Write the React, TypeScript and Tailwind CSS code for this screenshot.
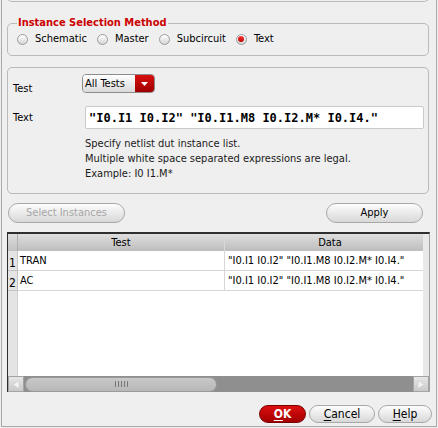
import React from 'react';

const rowsData = [
  { n: 1, test: 'TRAN', data: '"I0.I1 I0.I2" "I0.I1.M8 I0.I2.M* I0.I4."' },
  { n: 2, test: 'AC', data: '"I0.I1 I0.I2" "I0.I1.M8 I0.I2.M* I0.I4."' },
];

function Radio({ label, checked }: { label: string; checked?: boolean }) {
  return (
    <div className="flex items-center gap-[7px]">
      <span className="w-[11px] h-[11px] rounded-full border border-[#9c9c9c] bg-gradient-to-b from-[#ffffff] to-[#d6d6d6] flex items-center justify-center">
        {checked && (
          <span className="w-[6px] h-[6px] rounded-full bg-gradient-to-b from-[#ff3030] to-[#b80000]" />
        )}
      </span>
      <span>{label}</span>
    </div>
  );
}

function PillButton({
  children,
  className = '',
}: {
  children: React.ReactNode;
  className?: string;
}) {
  return (
    <div
      className={`flex items-center justify-center rounded-full border border-[#a8a8a8] bg-gradient-to-b from-[#fdfdfd] to-[#d8d8d8] ${className}`}
    >
      {children}
    </div>
  );
}

export default function App() {
  return (
    <div className="w-[438px] h-[428px] bg-[#efefef] overflow-hidden text-[11px] leading-[14px] text-black font-['DejaVu_Sans_Condensed','DejaVu_Sans',sans-serif]">
      <div className="ml-[1px] w-[436px] h-[427px] border-x border-b border-[#a9a9a9] px-[5px] flex flex-col">
        {/* tail of the group above */}
        <div className="-mt-[4px] h-[6px] w-[422px] border border-t-0 border-[#bababa] rounded-b-[5px]" />

        {/* Instance Selection Method */}
        <fieldset className="mt-[13px] w-[422px] border border-[#bababa] rounded-[5px] px-[9px] pb-[8px]">
          <legend className="px-[1px] text-[11px] leading-[16px] font-bold text-[#cc0000]">
            Instance Selection Method
          </legend>
          <div className="flex items-center h-[16px] gap-[10px]">
            <Radio label="Schematic" />
            <Radio label="Master" />
            <Radio label="Subcircuit" />
            <Radio label="Text" checked />
          </div>
        </fieldset>

        {/* Test / Text panel */}
        <div className="mt-[11px] w-[422px] h-[127px] border border-[#bababa] rounded-[5px] pl-[5px] pt-[6px]">
          <div className="flex">
            <div className="w-[69px] pt-[8px]">Test</div>
            <div className="w-[73px] h-[19px] flex rounded-[4px] border border-[#8c8c8c] overflow-hidden">
              <div className="flex-1 bg-gradient-to-b from-[#ffffff] to-[#dadada] pl-[2px] flex items-center">
                All Tests
              </div>
              <div className="w-[19px] bg-gradient-to-b from-[#d81010] to-[#a00000] flex items-center justify-center">
                <svg width="7" height="4" viewBox="0 0 7 4">
                  <path d="M0 0H7L3.5 4Z" fill="#ffffff" />
                </svg>
              </div>
            </div>
          </div>

          <div className="flex items-center mt-[10px]">
            <div className="w-[72px]">Text</div>
            <div className="w-[339px] h-[23px] bg-white border border-[#cacaca] rounded-[2px] px-[3px] flex items-center text-[12px] font-bold whitespace-pre font-['DejaVu_Sans_Mono',monospace]">
              "I0.I1 I0.I2" "I0.I1.M8 I0.I2.M* I0.I4."
            </div>
          </div>

          <div className="ml-[72px] mt-[7px] leading-[15px] text-[#1a1a1a]">
            <div>Specify netlist dut instance list.</div>
            <div>Multiple white space separated expressions are legal.</div>
            <div>Example: I0 I1.M*</div>
          </div>
        </div>

        {/* action buttons */}
        <div className="mt-[9px] flex items-center">
          <PillButton className="ml-[1px] w-[117px] h-[20px] text-[#a6a6a6]">
            Select Instances
          </PillButton>
          <PillButton className="ml-auto mr-[8px] w-[97px] h-[20px]">Apply</PillButton>
        </div>

        {/* table */}
        <div className="mt-[9px] w-[423px] h-[160px] border-t-2 border-l border-r border-t-[#2e2e2e] border-l-[#2e2e2e] border-r-[#a0a0a0] bg-[#e9e9e9] flex flex-col">
          <div className="flex h-[17px] shrink-0">
            <div className="w-[10px] bg-gradient-to-b from-[#dedede] to-[#c2c2c2] border-r border-[#b0b0b0]" />
            <div className="w-[207px] bg-gradient-to-b from-[#dedede] to-[#bdbdbd] border-r border-[#d8d8d8] flex items-center justify-center">
              Test
            </div>
            <div className="w-[198px] bg-gradient-to-b from-[#dedede] to-[#bdbdbd] flex items-center justify-center pl-[12px]">
              Data
            </div>
          </div>

          {rowsData.map((r) => (
            <div key={r.n} className="flex h-[20px] shrink-0">
              <div className="w-[10px] bg-[#e4e4e4] border-r border-b border-[#c4c4c4] flex items-end justify-center pb-[1px] text-[12px] leading-[12px]">
                {r.n}
              </div>
              <div className="w-[207px] bg-white border-b border-r border-[#d6d6d6] pl-[2px] flex items-center">
                {r.test}
              </div>
              <div className="w-[198px] bg-white border-b border-[#d6d6d6] pl-[3px] flex items-center whitespace-pre">
                {r.data}
              </div>
            </div>
          ))}

          <div className="flex flex-1">
            <div className="w-[10px] bg-[#e4e4e4] border-r border-[#d0d0d0]" />
            <div className="w-[405px] bg-white" />
          </div>

          {/* horizontal scrollbar */}
          <div className="h-[16px] shrink-0 bg-[#8f8f8f] flex items-center">
            <div className="w-[16px] h-[16px] bg-gradient-to-b from-[#e6e6e6] to-[#c9c9c9] border border-[#a4a4a4] flex items-center justify-center">
              <svg width="8" height="9" viewBox="0 0 8 9">
                <path d="M7 0.5V8.5L0.8 4.5Z" fill="#f4f4f4" stroke="#d0d0d0" strokeWidth="0.8" />
              </svg>
            </div>
            <div className="ml-[1px] w-[192px] h-[15px] rounded-full bg-gradient-to-b from-[#c8c8c8] to-[#b8b8b8] border border-[#9a9a9a] flex items-center justify-center gap-[2px]">
              <span className="w-px h-[6px] bg-[#777777]" />
              <span className="w-px h-[6px] bg-[#777777]" />
              <span className="w-px h-[6px] bg-[#777777]" />
              <span className="w-px h-[6px] bg-[#777777]" />
              <span className="w-px h-[6px] bg-[#777777]" />
            </div>
            <div className="flex-1" />
            <div className="w-[16px] h-[16px] bg-gradient-to-b from-[#e6e6e6] to-[#c9c9c9] border border-[#a4a4a4] flex items-center justify-center">
              <svg width="8" height="9" viewBox="0 0 8 9">
                <path d="M1 0.5V8.5L7.2 4.5Z" fill="#f4f4f4" stroke="#d0d0d0" strokeWidth="0.8" />
              </svg>
            </div>
          </div>
        </div>

        {/* dialog buttons */}
        <div className="mt-[13px] flex justify-end gap-[3px] -mr-[1px]">
          <div className="w-[47px] h-[18px] rounded-full border border-[#7a0000] bg-gradient-to-b from-[#dc1010] to-[#a30000] flex items-center justify-center text-white font-bold text-[12px]">
            <span>
              <span className="underline underline-offset-2">O</span>K
            </span>
          </div>
          <PillButton className="w-[66px] h-[18px] text-[12px]">
            <span>
              <span className="underline underline-offset-2">C</span>ancel
            </span>
          </PillButton>
          <PillButton className="w-[54px] h-[18px] text-[12px]">
            <span>
              <span className="underline underline-offset-2">H</span>elp
            </span>
          </PillButton>
        </div>
      </div>
    </div>
  );
}
